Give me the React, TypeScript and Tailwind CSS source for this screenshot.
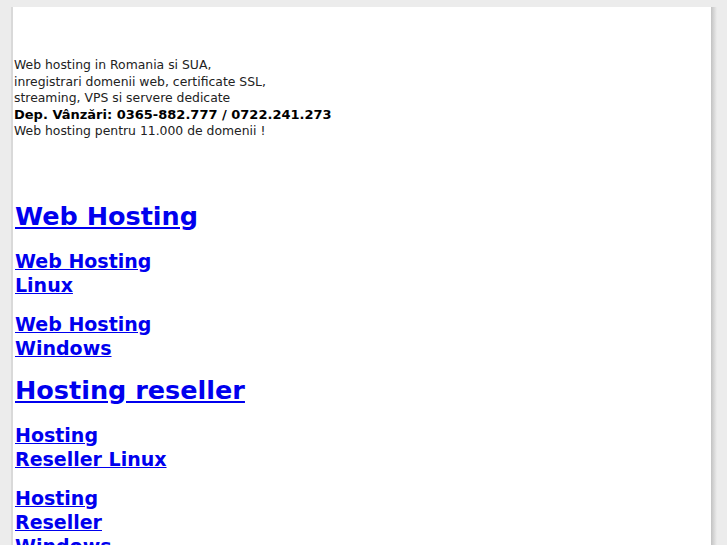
import React from 'react';

const sections = [
  {
    title: 'Web Hosting',
    items: ['Web Hosting Linux', 'Web Hosting Windows'],
  },
  {
    title: 'Hosting reseller',
    items: ['Hosting Reseller Linux', 'Hosting Reseller Windows'],
  },
];

const App: React.FC = () => {
  return (
    <div className="min-h-screen bg-[#ececec] pt-[7px] font-['DejaVu_Sans',sans-serif] overflow-hidden">
      <div className="flex ml-[11px]">
        <div className="w-[700px] min-h-[600px] bg-white border-l-2 border-[#d9d9d9]">
          <div className="pl-[1px] pt-[50px] text-[12.4px] leading-[16.5px] text-[#222]">
            <p>
              Web hosting in Romania si SUA,
              <br />
              inregistrari domenii web, certificate SSL,
              <br />
              streaming, VPS si servere dedicate
            </p>
            <p className="font-bold text-black text-[13px]">Dep. Vânzări: 0365-882.777 / 0722.241.273</p>
            <p>Web hosting pentru 11.000 de domenii !</p>
          </div>

          <div className="pl-[2px] pt-[61px]">
            {sections.map(s => (
              <div key={s.title} className="mb-[15px]">
                <h2 className="text-[25.5px] leading-[30px] font-bold mb-[18px]">
                  <a href="#" className="text-[#0000ee] underline">
                    {s.title}
                  </a>
                </h2>
                <div className="w-[160px] flex flex-col gap-[15px]">
                  {s.items.map(item => (
                    <h3 key={item} className="text-[19px] leading-[24px] font-bold">
                      <a href="#" className="text-[#0000ee] underline">
                        {item}
                      </a>
                    </h3>
                  ))}
                </div>
              </div>
            ))}
          </div>
        </div>
        <div className="w-[6px] bg-gradient-to-r from-[#c2c2c2] to-[#ececec]" />
      </div>
    </div>
  );
};

export default App;
